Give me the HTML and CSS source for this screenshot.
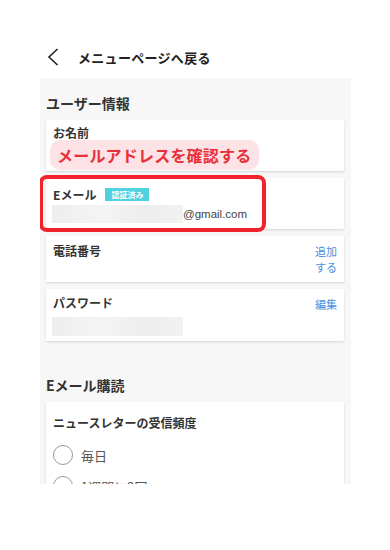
FILE: index.html
```html
<!DOCTYPE html>
<html lang="ja">
<head>
  <meta charset="UTF-8" />
  <meta name="viewport" content="width=device-width, initial-scale=1.0" />
  <title>アカウント設定</title>
  <link rel="stylesheet" href="styles.css">
</head>
<body>
  <header class="topbar">
    <a class="back" href="#">
      <svg class="chevron" width="12" height="18" viewBox="0 0 12 18">
        <path d="M10.5 1 L2 9 L10.5 17" fill="none" stroke="#222" stroke-width="1.6"/>
      </svg>
      <span>メニューページへ戻る</span>
    </a>
  </header>

  <main class="panel">
    <h2 class="section-title">ユーザー情報</h2>
    <div class="cards">
      <div class="card card-name">
        <div class="label">お名前</div>
        <div class="notice">メールアドレスを確認する</div>
      </div>

      <div class="card card-email">
        <div class="label-row">
          <span class="label">Eメール</span>
          <span class="verified">認証済み</span>
        </div>
        <div class="email-row">
          <span class="masked masked-email"></span>
          <span class="domain">@gmail.com</span>
        </div>
        <div class="highlight"></div>
      </div>

      <div class="card card-row">
        <div class="label">電話番号</div>
        <a class="action" href="#">追加<br>する</a>
      </div>

      <div class="card card-row card-password">
        <div>
          <div class="label">パスワード</div>
          <div class="masked masked-pass"></div>
        </div>
        <a class="action" href="#">編集</a>
      </div>
    </div>

    <h2 class="section-title subscribe">Eメール購読</h2>
    <div class="card card-news">
      <div class="label">ニュースレターの受信頻度</div>
      <label class="radio"><span class="circle"></span>毎日</label>
      <label class="radio"><span class="circle"></span>1週間に2回</label>
    </div>
  </main>
</body>
</html>
```

FILE: styles.css
```css
body {
  margin: 0;
  font-family: "Noto Sans CJK JP", "Noto Sans", sans-serif;
  background-color: #fff;
  color: #333;
}
.topbar {
  height: 78px;
  box-sizing: border-box;
  padding: 44px 0 0 47px;
}
.back {
  display: flex;
  align-items: center;
  height: 26px;
  color: #222;
  text-decoration: none;
  font-size: 13px;
  font-weight: bold;
  letter-spacing: 0.3px;
}
.chevron {
  margin-right: 19px;
}
.panel {
  width: 311px;
  height: 406px;
  box-sizing: border-box;
  margin-left: 40px;
  padding: 0 7px 0 6px;
  background-color: #f7f7f7;
  overflow: hidden;
}
.section-title {
  margin: 0 0 7px;
  padding-top: 15px;
  font-size: 14px;
  line-height: 20px;
  color: #333;
}
.section-title.subscribe {
  padding-top: 34px;
}
.cards {
  display: flex;
  flex-direction: column;
  gap: 7px;
}
.card {
  position: relative;
  background: #fff;
  padding: 0 7px;
  box-shadow: 0 1px 2px rgba(0,0,0,0.14);
}
.label {
  font-size: 12px;
  font-weight: bold;
  color: #333;
}
.card-name {
  padding-top: 6px;
  padding-bottom: 1px;
}
.card-name .label {
  line-height: 14px;
}
.notice {
  display: inline-block;
  margin: 0 0 0 -3px;
  padding: 0 8px 0 7px;
  height: 30px;
  line-height: 30px;
  background: #fde3e6;
  border-radius: 10px;
  color: #e8303a;
  font-size: 16px;
  font-weight: bold;
  letter-spacing: 0.2px;
}
.card-email {
  padding-top: 7px;
  padding-bottom: 6px;
}
.label-row {
  display: flex;
  align-items: center;
  height: 18px;
}
.verified {
  margin-left: 9px;
  padding: 0 6px;
  height: 13px;
  line-height: 13px;
  background: #4fd1e0;
  color: #fff;
  font-size: 8px;
  font-weight: bold;
}
.email-row {
  display: flex;
  align-items: center;
  height: 18px;
  margin-top: 2px;
}
.masked {
  display: block;
  background: linear-gradient(90deg, #eeeeee, #f4f4f4 40%, #ededed 70%, #f2f2f2);
}
.masked-email {
  width: 131px;
  height: 18px;
  margin-left: -1px;
}
.domain {
  font-family: "Liberation Sans", Arial, sans-serif;
  font-size: 11.5px;
  color: #444;
}
.highlight {
  position: absolute;
  left: -7px;
  top: -3px;
  width: 219px;
  height: 49px;
  border: 4px solid #f1222c;
  border-radius: 8px;
}
.card-row {
  display: flex;
  justify-content: space-between;
  align-items: flex-start;
  padding-top: 6px;
  padding-bottom: 7px;
}
.card-row > .label {
  line-height: 18px;
}
.action {
  margin-top: 1px;
  font-size: 11px;
  line-height: 16px;
  color: #4a8fe0;
  text-decoration: none;
  text-align: right;
}
.card-password {
  padding-bottom: 5px;
}
.card-password .label {
  line-height: 16px;
}
.masked-pass {
  width: 131px;
  height: 19px;
  margin: 6px 0 0 -1px;
}
.card-news {
  padding-top: 12px;
  padding-bottom: 12px;
}
.card-news > .label {
  line-height: 18px;
}
.radio {
  display: flex;
  align-items: center;
  height: 22px;
  margin-top: 9px;
  font-size: 13px;
  color: #555;
}
.card-news > .label + .radio {
  margin-top: 12px;
}
.circle {
  width: 18px;
  height: 18px;
  border: 1.5px solid #999;
  border-radius: 50%;
  margin-right: 8px;
}
```
